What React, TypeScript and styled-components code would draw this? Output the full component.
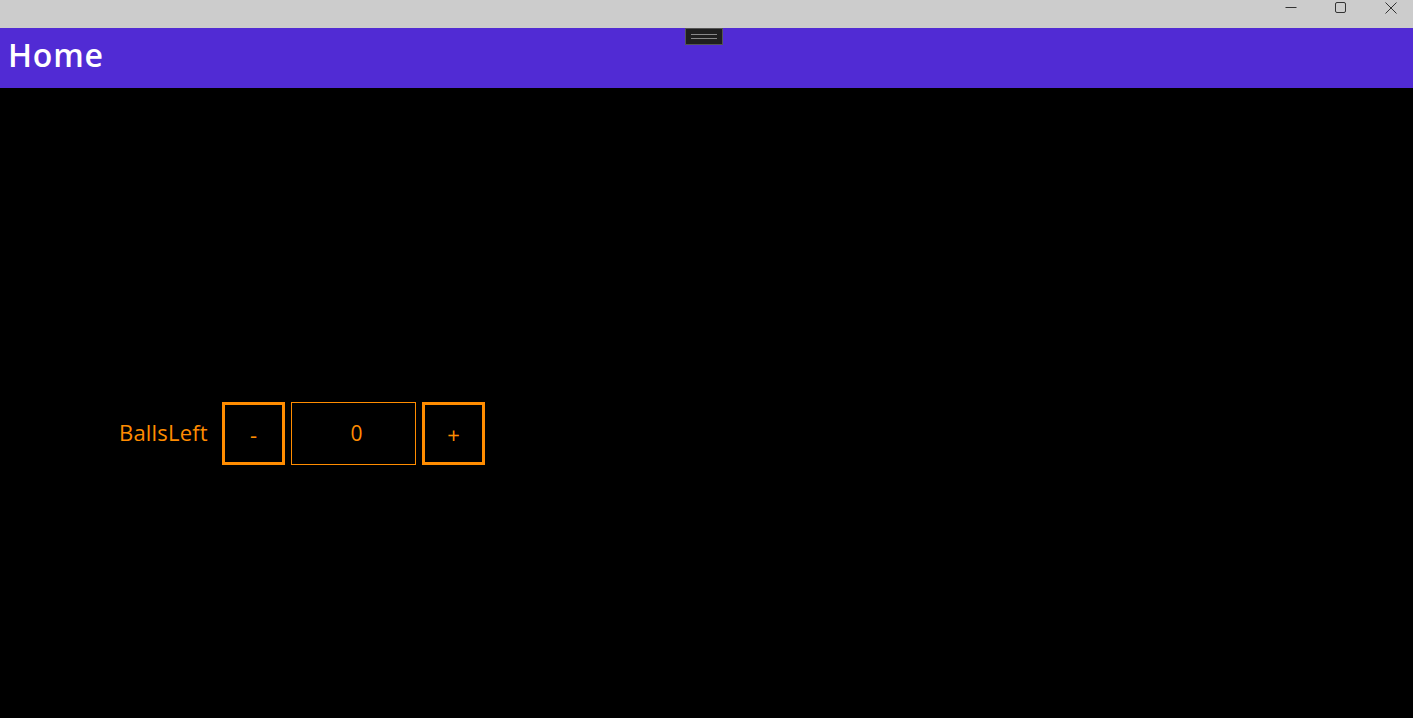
import styled, { createGlobalStyle } from "styled-components";

const GlobalStyle = createGlobalStyle`
  html, body {
    margin: 0;
    padding: 0;
    height: 100%;
    background: #000;
  }
  #root {
    height: 100%;
  }
  * {
    box-sizing: border-box;
  }
`;

const Window = styled.div`
  height: 718px;
  display: flex;
  flex-direction: column;
  font-family: "Open Sans", "Noto Sans", sans-serif;
  position: relative;
  overflow: hidden;
`;

const TitleBar = styled.div`
  height: 28px;
  background: #cccccc;
  display: flex;
  justify-content: flex-end;
  flex-shrink: 0;
`;

const CaptionButton = styled.div`
  width: 50px;
  height: 28px;
  display: flex;
  align-items: flex-start;
  justify-content: center;
  padding: 2px 0 0 6px;
  color: #333;
`;

const Header = styled.header`
  height: 60px;
  background: #512bd4;
  display: flex;
  align-items: center;
  padding: 0 8px 8px;
  flex-shrink: 0;
`;

const Title = styled.h1`
  margin: 0;
  color: #fff;
  font-size: 32px;
  font-weight: 600;
  letter-spacing: 0.8px;
`;

const Grabber = styled.div`
  position: absolute;
  top: 28px;
  left: 685px;
  width: 38px;
  height: 17px;
  background: #1f1f1f;
  border: 1px solid #555;
  display: flex;
  align-items: center;
  justify-content: center;
  &::after {
    content: "";
    width: 26px;
    height: 3px;
    border-top: 1px solid #888;
    border-bottom: 1px solid #888;
  }
`;

const Content = styled.main`
  flex: 1;
  background: #000;
  padding: 314px 0 0 119px;
`;

const StepperRow = styled.div`
  display: flex;
  align-items: center;
  gap: 6px;
  color: #ff8c00;
`;

const Label = styled.span`
  font-size: 22px;
  margin-right: 8px;
  margin-top: -3px;
  line-height: 1;
  letter-spacing: 0.2px;
`;

const StepButton = styled.button`
  width: 63px;
  height: 63px;
  background: transparent;
  border: 3px solid #ff8c00;
  color: #ff8c00;
  font-family: inherit;
  font-size: 22px;
  padding: 0;
  cursor: pointer;
`;

const ValueBox = styled.div<{ $width: number }>`
  width: ${(p) => p.$width}px;
  height: 63px;
  border: 1px solid #ff8c00;
  display: flex;
  align-items: center;
  justify-content: center;
  font-size: 21px;
  padding: 0 0 2px 6px;
`;

const App = () => {
  return (
    <Window>
      <GlobalStyle />
      <TitleBar>
        <CaptionButton>
          <svg width="12" height="12" viewBox="0 0 12 12">
            <line x1="0.5" y1="5.5" x2="11.5" y2="5.5" stroke="currentColor" strokeWidth="1" />
          </svg>
        </CaptionButton>
        <CaptionButton>
          <svg width="12" height="12" viewBox="0 0 12 12">
            <rect x="0.5" y="0.5" width="10" height="10" rx="1.5" fill="none" stroke="currentColor" strokeWidth="1" />
          </svg>
        </CaptionButton>
        <CaptionButton>
          <svg width="12" height="12" viewBox="0 0 12 12">
            <path d="M0.5 0.5 L11.5 11.5 M11.5 0.5 L0.5 11.5" stroke="currentColor" strokeWidth="1" />
          </svg>
        </CaptionButton>
      </TitleBar>
      <Header>
        <Title>Home</Title>
      </Header>
      <Grabber />
      <Content>
        <StepperRow>
          <Label>BallsLeft</Label>
          <StepButton>-</StepButton>
          <ValueBox $width={125}>0</ValueBox>
          <StepButton>+</StepButton>
        </StepperRow>
      </Content>
    </Window>
  );
};

export default App;
